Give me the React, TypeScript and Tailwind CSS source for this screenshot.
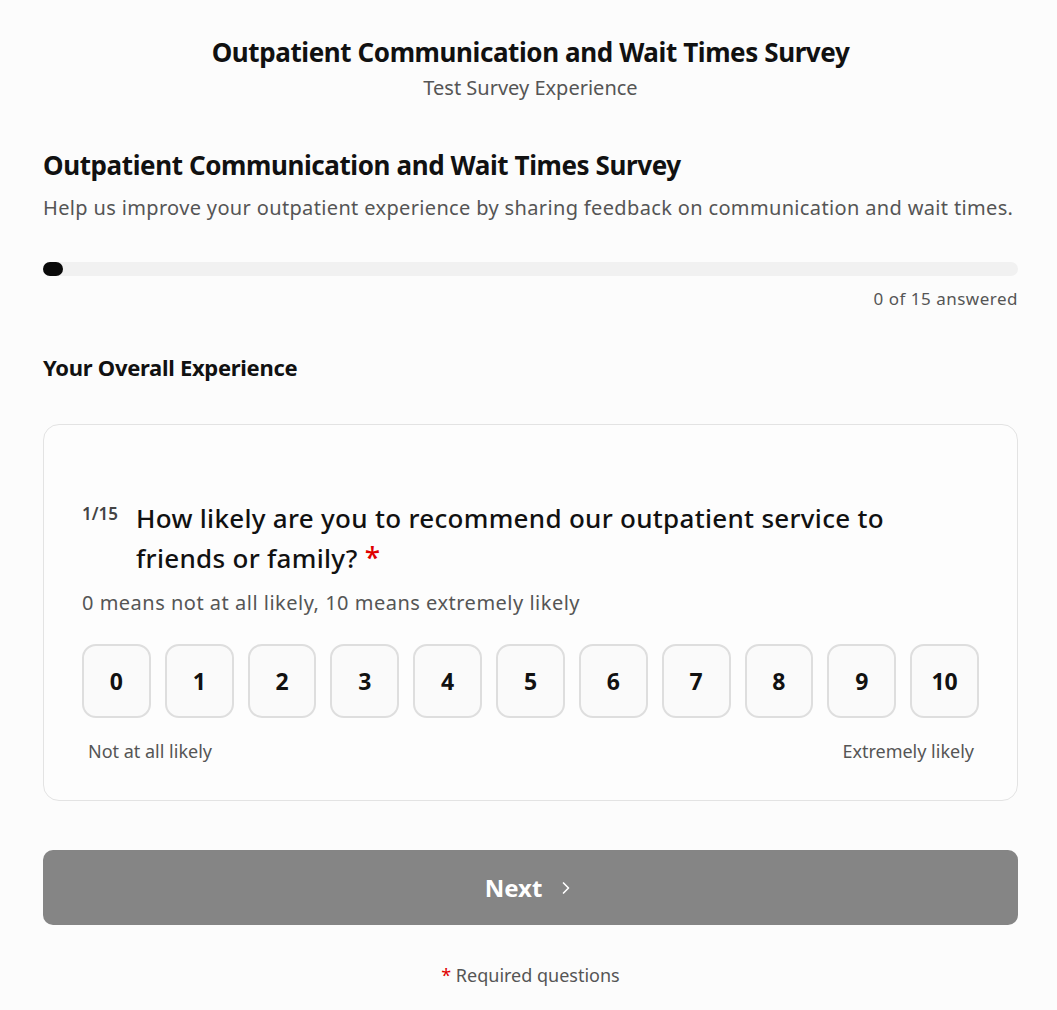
import { ChevronRight } from 'lucide-react';

const escala = [0, 1, 2, 3, 4, 5, 6, 7, 8, 9, 10];

export default function App() {
  return (
    <div
      className="min-h-screen bg-[#fcfcfc] text-[#111] pl-[43px] pr-[39px] pb-6"
      style={{ fontFamily: '"Noto Sans", Roboto, sans-serif' }}
    >
      {/* cabecera */}
      <div className="flex flex-col items-center pt-[34px]">
        <h1 className="text-[26px] leading-[36px] font-bold tracking-[-0.4px]">
          Outpatient Communication and Wait Times Survey
        </h1>
        <p className="text-[20px] leading-[30px] text-[#555] mt-[3px]">Test Survey Experience</p>
      </div>

      <div className="mt-[44px]">
        <h2 className="text-[26px] leading-[36px] font-bold tracking-[-0.4px]">
          Outpatient Communication and Wait Times Survey
        </h2>
        <p className="text-[20px] leading-[30px] text-[#555] mt-[10px] tracking-[0.35px]">
          Help us improve your outpatient experience by sharing feedback on communication and wait times.
        </p>
      </div>

      {/* progreso */}
      <div className="mt-[39px]">
        <div className="h-[14px] w-full rounded-full bg-[#f1f1f1]">
          <div className="h-[14px] w-[20px] rounded-full bg-[#0a0a0a]" />
        </div>
        <p className="text-right text-[17px] leading-[24px] text-[#555] mt-[11px] tracking-[0.5px]">0 of 15 answered</p>
      </div>

      <h3 className="text-[22px] leading-[30px] font-bold mt-[41px] tracking-[-0.3px]">Your Overall Experience</h3>

      {/* tarjeta */}
      <div className="mt-[42px] rounded-[16px] border border-[#e3e3e3] bg-[#fdfdfd] px-[38px] pt-[74px] pb-[36px]">
        <div className="flex items-start gap-[14px]">
          <span className="text-[17px] leading-[24px] text-[#444] font-semibold mt-[3px] w-[40px]">1/15</span>
          <p className="text-[26px] leading-[39px] font-medium text-[#111] tracking-[0.3px]">
            How likely are you to recommend our outpatient service to
            <br />
            friends or family? <span className="text-[#e00000] text-[28px]">*</span>
          </p>
        </div>
        <p className="text-[20px] leading-[30px] text-[#555] mt-[10px] tracking-[0.5px]">
          0 means not at all likely, 10 means extremely likely
        </p>

        <div className="flex gap-[14px] mt-[26px]">
          {escala.map((n) => (
            <button
              key={n}
              className="w-[69px] h-[74px] rounded-[14px] border-2 border-[#dedede] bg-[#fafafa] text-[23px] font-bold text-[#111] flex items-center justify-center"
            >
              {n}
            </button>
          ))}
        </div>

        <div className="flex justify-between w-[898px] px-[6px] mt-[20px] text-[18px] leading-[26px] text-[#555]">
          <span>Not at all likely</span>
          <span>Extremely likely</span>
        </div>
      </div>

      <button className="mt-[49px] w-full h-[75px] rounded-[10px] bg-[#858585] text-white text-[24px] font-bold flex items-center justify-center gap-[14px]">
        Next
        <ChevronRight className="w-[20px] h-[20px]" strokeWidth={2} />
      </button>

      <p className="text-center text-[18px] leading-[26px] text-[#555] mt-[37px]">
        <span className="text-[#e00000]">*</span> Required questions
      </p>
    </div>
  );
}
